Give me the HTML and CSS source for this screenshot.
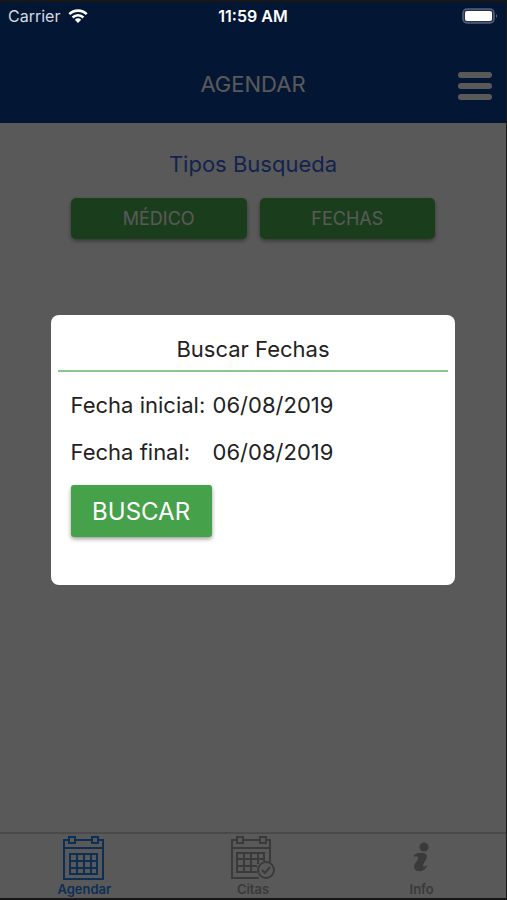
FILE: index.html
```html
<!DOCTYPE html>
<html lang="es">
  <head>
    <meta charset="UTF-8" />
    <meta name="viewport" content="width=device-width, initial-scale=1.0" />
    <title>Agendar</title>
    <link rel="stylesheet" href="styles.css">
  </head>
  <body>
    <div class="screen">
      <div class="statusbar">
        <div class="statusbar-carrier">
          <span>Carrier</span>
          <svg width="20" height="14" viewBox="0 0 20 14" fill="none" stroke="#fff" stroke-width="2.6">
            <path d="M1.3 5.2a12.3 12.3 0 0 1 17.4 0" />
            <path d="M4.6 8.5a7.6 7.6 0 0 1 10.8 0" />
            <path d="M10 14 6.8 10.7a4.5 4.5 0 0 1 6.4 0z" fill="#fff" stroke="none" />
          </svg>
        </div>
        <div class="statusbar-time">11:59 AM</div>
        <div class="statusbar-battery">
          <svg width="36" height="16" viewBox="0 0 36 16">
            <rect x="1" y="1" width="31" height="14" rx="4" fill="#26344e" stroke="#56627a" stroke-width="1.5" />
            <rect x="3" y="3" width="27" height="10" rx="2" fill="#fff" />
            <path d="M34 6q2 2 0 4z" fill="#66728a" />
          </svg>
        </div>
      </div>

      <header class="header">
        <h1 class="header-title">AGENDAR</h1>
        <button class="header-menu" type="button" aria-label="Menú">
          <svg width="34" height="28" viewBox="0 0 34 28" stroke="#fff" stroke-width="6" stroke-linecap="round">
            <path d="M3 3h28M3 14h28M3 25h28" />
          </svg>
        </button>
      </header>

      <main class="content">
        <h2 class="content-title">Tipos Busqueda</h2>
        <div class="options">
          <button class="btn options-btn" type="button">MÉDICO</button>
          <button class="btn options-btn" type="button">FECHAS</button>
        </div>
      </main>

      <nav class="tabbar">
        <a class="tab tab--active" href="#agendar">
          <svg width="44" height="44" viewBox="0 0 44 44" fill="none" stroke="currentColor" stroke-width="2">
            <path d="M7 4H2v39h39V4h-4M13 4h17M2 12h39" />
            <rect x="7" y="1" width="6" height="6" />
            <rect x="30" y="1" width="6" height="6" />
            <path d="M8 18h27v20H8zM15 18v20M22 18v20M29 18v20M8 25h27M8 32h27" />
          </svg>
          <span>Agendar</span>
        </a>
        <a class="tab" href="#citas">
          <svg width="44" height="44" viewBox="0 0 44 44" fill="none" stroke="currentColor" stroke-width="2">
            <path d="M6 4H1v38h27M12 4h17M35 4h4v22M1 12h38" />
            <rect x="6" y="1" width="6" height="6" />
            <rect x="29" y="1" width="6" height="6" />
            <path d="M26 36H6V17h27v8M13 17v19M20 17v19M27 17v11M6 23h27M6 30h20" />
            <circle cx="35" cy="34" r="8" />
            <path d="m31 34 3 3 5-6" />
          </svg>
          <span>Citas</span>
        </a>
        <a class="tab" href="#info">
          <svg width="44" height="44" viewBox="0 0 44 44" fill="currentColor">
            <circle cx="24" cy="11" r="4.5" />
            <path d="M14 19c4-3 12-3 13 1 0 4-4 7-4 10 1 1 3 0 4-1-1 7-12 9-13 2 0-5 5-6 4-10-1-1-3-1-4 0z" />
          </svg>
          <span>Info</span>
        </a>
      </nav>

      <div class="overlay">
        <form class="modal" role="dialog" aria-labelledby="modal-title">
          <h2 class="modal-title" id="modal-title">Buscar Fechas</h2>
          <div class="modal-body">
            <div class="field">
              <label for="fecha-inicial">Fecha inicial:</label>
              <input id="fecha-inicial" type="text" value="06/08/2019" />
            </div>
            <div class="field">
              <label for="fecha-final">Fecha final:</label>
              <input id="fecha-final" type="text" value="06/08/2019" />
            </div>
            <button class="btn modal-btn" type="button">BUSCAR</button>
          </div>
        </form>
      </div>
    </div>
  </body>
</html>
```
FILE: styles.css
```css
:root {
  --color-header: #093f92;
  --color-green: #4caf50;
  --color-text: #222;
}
* {
  box-sizing: border-box;
}
body {
  margin: 0;
  font-family: Inter, Roboto, "Liberation Sans", sans-serif;
}
h1,
h2 {
  margin: 0;
  font-weight: 400;
}
button,
input {
  font-family: inherit;
}

.screen {
  position: relative;
  display: flex;
  flex-direction: column;
  min-height: 100vh;
  border: solid #181818;
  border-width: 2px 1px 2px 0;
  background: #fff;
}

.statusbar {
  position: relative;
  z-index: 2;
  display: grid;
  grid-template-columns: 1fr auto 1fr;
  align-items: center;
  height: 28px;
  padding: 0 8px;
  font-size: 16px;
  color: #fff;
}
.statusbar-carrier {
  display: flex;
  align-items: center;
  gap: 8px;
  color: #d5dae2;
}
.statusbar-time {
  font-weight: 600;
}
.statusbar-battery {
  display: flex;
  justify-content: flex-end;
}

.header {
  display: grid;
  grid-template-columns: 1fr auto 1fr;
  align-items: center;
  height: 121px;
  margin-top: -28px;
  padding: 42px 14px 0;
  background: var(--color-header);
}
.header-title {
  grid-column: 2;
  font-size: 22px;
  color: #fff;
}
.header-menu {
  justify-self: end;
  display: flex;
  padding: 4px 0 0;
  border: 0;
  background: none;
}

.content {
  flex: 1;
  display: flex;
  flex-direction: column;
  align-items: center;
  gap: 20px;
  padding-top: 27px;
}
.content-title {
  font-size: 22px;
  line-height: 28px;
  color: #3a64e0;
}
.options {
  display: flex;
  gap: 13px;
  width: 72%;
}
.btn {
  border: 0;
  background: var(--color-green);
  color: #fff;
  box-shadow: 0 2px 4px rgba(0, 0, 0, 0.4);
}
.options-btn {
  flex: 1;
  height: 41px;
  border-radius: 5px;
  font-size: 18px;
}

.tabbar {
  display: flex;
  height: 66px;
  border-top: 2px solid #d4d4d4;
}
.tab {
  flex: 1;
  display: flex;
  flex-direction: column;
  align-items: center;
  padding-top: 2px;
  font-size: 13px;
  font-weight: 600;
  line-height: 18px;
  text-decoration: none;
  color: #a6a6a6;
}
.tab--active {
  color: #2a86f0;
}

.overlay {
  position: absolute;
  inset: 0;
  z-index: 1;
  display: flex;
  justify-content: center;
  align-items: center;
  background: rgba(0, 0, 0, 0.65);
}
.modal {
  width: 80%;
  min-height: 30vh;
  padding: 17px 7px;
  border-radius: 8px;
  background: #fff;
  color: var(--color-text);
}
.modal-title {
  padding-bottom: 4px;
  border-bottom: 2px solid #8cc68f;
  font-size: 22px;
  line-height: 34px;
  text-align: center;
}
.modal-body {
  padding: 9px 13px 0;
}
.field {
  display: flex;
  align-items: center;
  height: 47px;
  font-size: 22px;
}
.field label {
  width: 142px;
}
.field input {
  flex: 1;
  min-width: 0;
  padding: 0;
  border: 0;
  background: none;
  font-size: 22px;
  color: var(--color-text);
}
.modal-btn {
  width: 141px;
  height: 52px;
  margin-top: 10px;
  border-radius: 3px;
  background: #46a24a;
  font-size: 24px;
}
```
